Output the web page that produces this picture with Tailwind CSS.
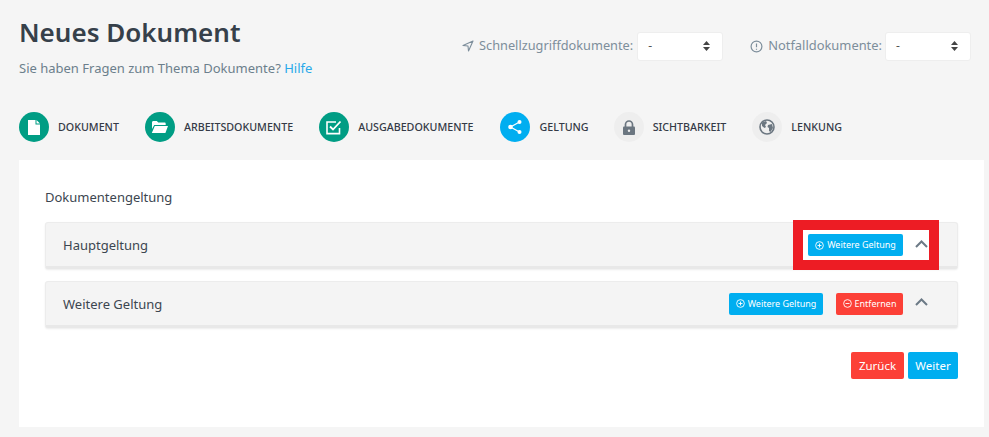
<!DOCTYPE html>
<html lang="de">
<head>
    <meta charset="UTF-8">
    <title>Neues Dokument</title>
    <script src="https://cdn.jsdelivr.net/npm/@tailwindcss/browser@4"></script>
</head>
<body class="bg-[#f5f5f5] font-['Noto_Sans','Open_Sans',sans-serif] overflow-hidden">
    <div class="w-[989px] h-[437px] pl-[19px] pr-[5px] pt-[13px]">
        <!-- Kopfzeile -->
        <div class="flex justify-between h-[93px]">
            <div>
                <h1 class="text-[26px] leading-[38px] font-semibold text-[#36404a]">Neues Dokument</h1>
                <p class="mt-[8px] text-[13px] leading-[18px] text-[#6c7f8c]">Sie haben Fragen zum Thema Dokumente? <a class="text-[#29a9ea]">Hilfe</a></p>
            </div>
            <div class="flex items-start gap-[27px] pt-[18px] pr-[13px] text-[12.900px] text-[#7d8e9b]">
                <div class="flex items-center h-[30px] gap-[5px]">
                    <svg class="w-[12px] h-[12px]" viewBox="0 0 24 24" fill="none" stroke="#7d8e9b" stroke-width="2.2" stroke-linejoin="round"><path d="M22 2 2 11l10 1 1 10z"/></svg>
                    <span class="text-[12.750px]">Schnellzugriffdokumente:</span>
                    <div class="flex items-center justify-between w-[86px] h-[29px] ml-[-1px] pl-[10px] pr-[12px] bg-white rounded-[3px] border border-[#eeeeee] text-[#555] text-[12px]">
                        <span>-</span>
                        <svg class="w-[7px] h-[10px]" viewBox="0 0 7 10" fill="#444"><path d="M3.500 0 7 4H0zM3.500 10 0 6h7z"/></svg>
                    </div>
                </div>
                <div class="flex items-center h-[30px] gap-[5px]">
                    <svg class="w-[13px] h-[13px]" viewBox="0 0 24 24" fill="none" stroke="#7d8e9b" stroke-width="2.2"><circle cx="12" cy="12" r="10"/><path d="M12 6.500v7M12 16v2"/></svg>
                    <span>Notfalldokumente:</span>
                    <div class="flex items-center justify-between w-[86px] h-[29px] ml-[-2px] pl-[10px] pr-[12px] bg-white rounded-[3px] border border-[#eeeeee] text-[#555] text-[12px]">
                        <span>-</span>
                        <svg class="w-[7px] h-[10px]" viewBox="0 0 7 10" fill="#444"><path d="M3.500 0 7 4H0zM3.500 10 0 6h7z"/></svg>
                    </div>
                </div>
            </div>
        </div>

        <!-- Schritte -->
        <div class="flex items-center h-[30px] mt-[6px] text-[10.700px] font-medium text-[#343a46]">
            <div class="flex items-center gap-[9px] mr-[26px]">
                <div class="flex items-center justify-center w-[30px] h-[30px] rounded-full bg-[#009d84]">
                    <svg class="w-[12px] h-[15px]" viewBox="0 0 12 15" fill="#fff"><path d="M0 0h7.500v4.500H12V15H0zM8.500 0 12 3.500H8.500z"/></svg>
                </div>
                <span>DOKUMENT</span>
            </div>
            <div class="flex items-center gap-[9px] mr-[26px]">
                <div class="flex items-center justify-center w-[30px] h-[30px] rounded-full bg-[#009d84]">
                    <svg class="w-[17px] h-[14px]" viewBox="0 0 17 14" fill="#fff"><path d="M1 2.500C1 1.700 1.600 1 2.400 1h3.400l1.500 1.600h6.300c.6 0 1.100.5 1.100 1.100V5H3.200L1 9zM3.800 6H17l-2.600 7H.8z"/></svg>
                </div>
                <span>ARBEITSDOKUMENTE</span>
            </div>
            <div class="flex items-center gap-[9px] mr-[27px]">
                <div class="flex items-center justify-center w-[30px] h-[30px] rounded-full bg-[#009d84]">
                    <svg class="w-[16px] h-[15px]" viewBox="0 0 16 15" fill="none" stroke="#fff" stroke-width="1.600"><path d="M13.500 8v5.600H1V2h9"/><path d="M4 6.500 7 9.500 14.500 1.500" stroke-width="1.800"/></svg>
                </div>
                <span>AUSGABEDOKUMENTE</span>
            </div>
            <div class="flex items-center gap-[9px] mr-[25px]">
                <div class="flex items-center justify-center w-[30px] h-[30px] rounded-full bg-[#00aef0]">
                    <svg class="w-[16px] h-[16px]" viewBox="0 0 16 16" fill="#fff" stroke="#fff"><circle cx="12.500" cy="3" r="2" stroke="none"/><circle cx="3.500" cy="8" r="2.300" stroke="none"/><circle cx="12.500" cy="13" r="2" stroke="none"/><path d="M12.500 3 3.500 8l9 5" fill="none" stroke-width="1.200"/></svg>
                </div>
                <span>GELTUNG</span>
            </div>
            <div class="flex items-center gap-[9px] mr-[26px]">
                <div class="flex items-center justify-center w-[30px] h-[30px] rounded-full bg-[#eeeeee]">
                    <svg class="w-[12px] h-[15px]" viewBox="0 0 12 15"><path d="M2.500 7V4.500a3.500 3.500 0 0 1 7 0V7" fill="none" stroke="#6b7680" stroke-width="1.700"/><rect y="6.500" width="12" height="8.500" rx="1" fill="#6b7680"/><circle cx="6" cy="10.700" r="1.200" fill="#eee"/></svg>
                </div>
                <span>SICHTBARKEIT</span>
            </div>
            <div class="flex items-center gap-[9px]">
                <div class="flex items-center justify-center w-[30px] h-[30px] rounded-full bg-[#eeeeee]">
                    <svg class="w-[16px] h-[16px]" viewBox="0 0 16 16"><circle cx="8" cy="8" r="7" fill="none" stroke="#6b7680" stroke-width="1.600"/><path d="M3 3.500 7 2l1 2-2 2 1 2-1.500 1L3 7zM9 6l4-1 1 4-2.500 4-1.500-1V9L8.500 8z" fill="#6b7680"/></svg>
                </div>
                <span>LENKUNG</span>
            </div>
        </div>

        <!-- Karte -->
        <div class="relative h-[267px] mt-[18px] bg-white px-[26px] pt-[27px] text-[#3c4650]">
            <p class="text-[13px] leading-[20px]">Dokumentengeltung</p>
            <div class="flex items-center justify-between h-[47px] mt-[15px] pl-[17px] pr-[29px] bg-[#f4f4f4] border border-[#ececec] border-b-[3px] border-b-[#e8e8e8] rounded-[3px] shadow-[0_1px_2px_rgba(0,0,0,0.08)]">
                <span class="text-[13px] mt-[2px]">Hauptgeltung</span>
            </div>
            <div class="flex items-center justify-between h-[47px] mt-[12px] pl-[17px] pr-[29px] bg-[#f4f4f4] border border-[#ececec] border-b-[3px] border-b-[#e8e8e8] rounded-[3px] shadow-[0_1px_2px_rgba(0,0,0,0.08)]">
                <span class="text-[13px] mt-[2px]">Weitere Geltung</span>
                <div class="flex items-center">
                    <button class="flex items-center justify-center gap-[3px] w-[94px] h-[22px] rounded-[2px] bg-[#00aef0] text-white text-[9px]">
                        <svg class="w-[9px] h-[9px]" viewBox="0 0 10 10" fill="none" stroke="#fff"><circle cx="5" cy="5" r="4.300"/><path d="M2.800 5h4.400M5 2.800v4.400"/></svg>
                        Weitere Geltung
                    </button>
                    <button class="flex items-center justify-center gap-[3px] w-[67px] h-[22px] ml-[13px] rounded-[2px] bg-[#fc4037] text-white text-[9px]">
                        <svg class="w-[9px] h-[9px]" viewBox="0 0 10 10" fill="none" stroke="#fff"><circle cx="5" cy="5" r="4.300"/><path d="M2.800 5h4.400"/></svg>
                        Entfernen
                    </button>
                    <svg class="w-[13px] h-[8px] ml-[12px] mb-[3px]" viewBox="0 0 13 8" fill="none" stroke="#6c7a86" stroke-width="2"><path d="M1 7l5.500-5.500L12 7"/></svg>
                </div>
            </div>
            <div class="flex justify-end gap-[4px] mt-[24px]">
                <button class="h-[27px] w-[53px] rounded-[2px] bg-[#fc4037] text-white text-[11.500px]">Zurück</button>
                <button class="h-[27px] w-[50px] rounded-[2px] bg-[#00aef0] text-white text-[11.500px]">Weiter</button>
            </div>

            <!-- rote Markierung -->
            <div class="absolute left-[774px] top-[60px] flex items-center w-[146px] h-[50px] pl-[5px] bg-white border-[10px] border-[#ed1c24]">
                <button class="flex items-center justify-center gap-[3px] w-[95px] h-[22px] rounded-[2px] bg-[#00aef0] text-white text-[9px]">
                    <svg class="w-[9px] h-[9px]" viewBox="0 0 10 10" fill="none" stroke="#fff"><circle cx="5" cy="5" r="4.300"/><path d="M2.800 5h4.400M5 2.800v4.400"/></svg>
                    Weitere Geltung
                </button>
                <svg class="w-[13px] h-[8px] ml-[12px] mb-[2px]" viewBox="0 0 13 8" fill="none" stroke="#6c7a86" stroke-width="2"><path d="M1 7l5.500-5.500L12 7"/></svg>
            </div>
        </div>
    </div>
</body>
</html>
